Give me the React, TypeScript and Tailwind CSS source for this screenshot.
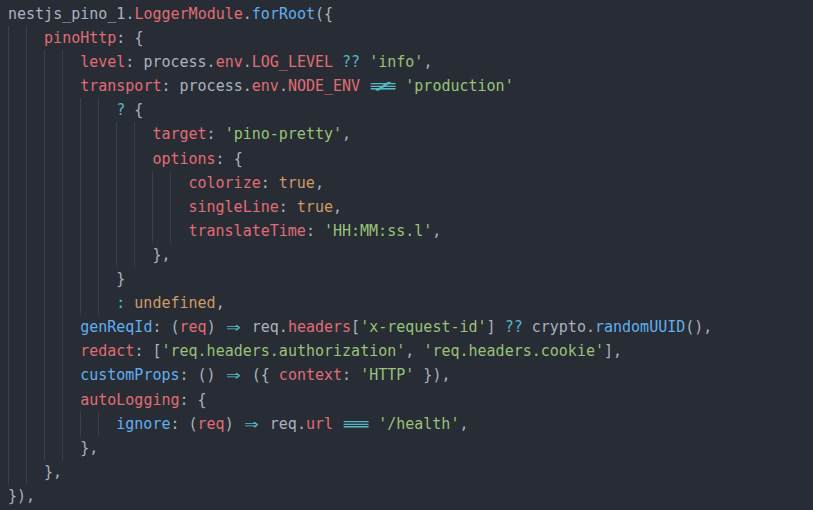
type Tok = [string, string];

const P = 'p', R = 'r', B = 'b', G = 'g', O = 'o', C = 'c';
const NEQ = 'neq', EQ = 'eq', ARROW = 'arrow';

const colors: Record<string, string> = {
  p: 'text-[#abb2bf]',
  r: 'text-[#e06c75]',
  b: 'text-[#61afef]',
  g: 'text-[#98c379]',
  o: 'text-[#d19a66]',
  c: 'text-[#56b6c2]',
};

const lines: [number, Tok[]][] = [
  [0, [[P, 'nestjs_pino_1.'], [R, 'LoggerModule'], [P, '.'], [B, 'forRoot'], [P, '({']]],
  [4, [[R, 'pinoHttp'], [P, ': {']]],
  [8, [[R, 'level'], [P, ': process.'], [R, 'env'], [P, '.'], [R, 'LOG_LEVEL'], [P, ' '], [C, '??'], [P, ' '], [G, "'info'"], [P, ',']]],
  [8, [[R, 'transport'], [P, ': process.'], [R, 'env'], [P, '.'], [R, 'NODE_ENV'], [P, ' '], [NEQ, ''], [P, ' '], [G, "'production'"]]],
  [12, [[C, '?'], [P, ' {']]],
  [16, [[R, 'target'], [P, ': '], [G, "'pino-pretty'"], [P, ',']]],
  [16, [[R, 'options'], [P, ': {']]],
  [20, [[R, 'colorize'], [P, ': '], [O, 'true'], [P, ',']]],
  [20, [[R, 'singleLine'], [P, ': '], [O, 'true'], [P, ',']]],
  [20, [[R, 'translateTime'], [P, ': '], [G, "'HH:MM:ss.l'"], [P, ',']]],
  [16, [[P, '},']]],
  [12, [[P, '}']]],
  [12, [[C, ':'], [P, ' '], [O, 'undefined'], [P, ',']]],
  [8, [[B, 'genReqId'], [P, ': ('], [R, 'req'], [P, ') '], [ARROW, ''], [P, ' req.'], [R, 'headers'], [P, '['], [G, "'x-request-id'"], [P, '] '], [C, '??'], [P, ' crypto.'], [B, 'randomUUID'], [P, '(),']]],
  [8, [[R, 'redact'], [P, ': ['], [G, "'req.headers.authorization'"], [P, ', '], [G, "'req.headers.cookie'"], [P, '],']]],
  [8, [[B, 'customProps'], [P, ': () '], [ARROW, ''], [P, ' ({ '], [R, 'context'], [P, ': '], [G, "'HTTP'"], [P, ' }),']]],
  [8, [[R, 'autoLogging'], [P, ': {']]],
  [12, [[B, 'ignore'], [P, ': ('], [R, 'req'], [P, ') '], [ARROW, ''], [P, ' req.'], [R, 'url'], [P, ' '], [EQ, ''], [P, ' '], [G, "'/health'"], [P, ',']]],
  [8, [[P, '},']]],
  [4, [[P, '},']]],
  [0, [[P, '}),']]],
];

// ligatures (=>, ===, !==) drawn with unicode glyphs stretched to their column width
function Ligature({ kind }: { kind: string }) {
  if (kind === ARROW) {
    return (
      <span className="inline-block w-[2ch] text-center text-[#56b6c2]">
        <span className="inline-block scale-x-[1.6] scale-y-[1.25]">⇒</span>
      </span>
    );
  }
  return (
    <span className="inline-block w-[3ch] text-center text-[#56b6c2]">
      <span className="inline-block scale-x-[3.2]">{kind === EQ ? '≡' : '≢'}</span>
    </span>
  );
}

export default function App() {
  return (
    <div
      className="w-[813px] h-[510px] overflow-hidden bg-[#282c34] pl-2 pt-[2px] text-[15px] leading-[24.1px]"
      style={{ fontFamily: '"DejaVu Sans Mono", "Liberation Mono", monospace' }}
    >
      {lines.map(([indent, toks], i) => (
        <div key={i} className="flex h-[24.1px] whitespace-pre">
          {Array.from({ length: indent / 2 }).map((_, j) => (
            <span key={j} className="w-[2ch] shrink-0 border-l border-[#3b4048]" />
          ))}
          <span>
            {toks.map(([k, t], j) =>
              k === NEQ || k === EQ || k === ARROW ? (
                <Ligature key={j} kind={k} />
              ) : (
                <span key={j} className={colors[k]}>
                  {t}
                </span>
              )
            )}
          </span>
        </div>
      ))}
    </div>
  );
}
